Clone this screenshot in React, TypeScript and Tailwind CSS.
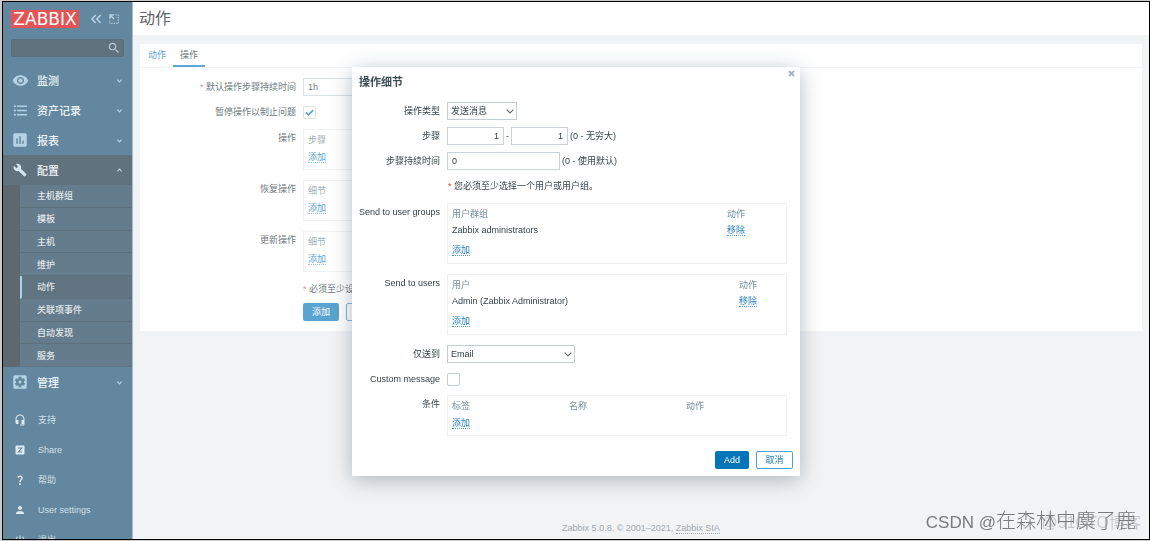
import type { ReactNode } from "react";
import type { IconType } from "react-icons";
import {
    MdBuild,
    MdFormatListBulleted,
    MdHeadsetMic,
    MdInsertChart,
    MdKeyboardDoubleArrowLeft,
    MdPerson,
    MdPowerSettingsNew,
    MdQuestionMark,
    MdSearch,
    MdSettingsApplications,
    MdVisibility,
} from "react-icons/md";

const configItems = ["主机群组", "模板", "主机", "维护", "动作", "关联项事件", "自动发现", "服务"];

function ShareIcon({ className }: { className?: string }) {
    return (
        <svg viewBox="0 0 12 12" className={className} aria-hidden="true">
            <rect x="1.5" y="1.5" width="9" height="9" rx="1" fill="currentColor" />
            <path d="M4 4h3.8L4.4 8H8" fill="none" stroke="#62879e" strokeWidth="1.1" />
        </svg>
    );
}

function KioskIcon() {
    return (
        <svg viewBox="0 0 10 10" className="size-[10px]" fill="none" stroke="currentColor" aria-hidden="true">
            <path d="M1 4.8V1h3.8M1.2 1.2l3.8 3.8" strokeWidth="1.4" />
            <path d="M6.5 .8h2.8v8.5H.8V6.5" strokeWidth="1" strokeDasharray="1.6 .8" />
        </svg>
    );
}

type NavItemProps = { icon: IconType; iconSize?: string; label: string; open?: boolean };

function NavItem({ icon: Icon, iconSize = "size-[17px]", label, open }: NavItemProps) {
    return (
        <a
            href="#"
            className={`flex h-[30px] items-center pl-2 pr-[9px] text-[11px] font-medium text-[#eef4f8] ${open ? "bg-[#61727f]" : ""}`}
        >
            <span className="flex w-[18px] justify-center">
                <Icon className={`${iconSize} ${open ? "text-[#d5e6f0]" : "text-[#b4d3e5]"}`} />
            </span>
            <span className="ml-2 flex-1 pt-px">{label}</span>
            <svg viewBox="0 0 7 7" className={`size-[7px] ${open ? "rotate-180" : ""}`} aria-hidden="true">
                <path d="M1.3 2.6l2.2 2.2 2.2-2.2" fill="none" stroke="#b4d3e5" strokeWidth="1.2" />
            </svg>
        </a>
    );
}

function ServiceItem({ icon: Icon, label }: { icon: IconType | typeof ShareIcon; label: string }) {
    return (
        <a href="#" className="flex h-[30px] items-center pl-[11px] text-[#d3e0e8]">
            <Icon className="size-3 text-[#e0e9ee]" />
            <span className="ml-3">{label}</span>
        </a>
    );
}

function Sidebar() {
    return (
        <aside className="w-[130px] shrink-0 border-r border-[#a9bfcc] bg-[#62879e]">
            <div className="flex h-[34px] items-center pl-2 pr-3 text-[#b8d3e2]">
                <a
                    href="#"
                    className="flex h-[18px] w-[68px] items-center justify-center bg-[#e45454] font-['DejaVu_Sans',sans-serif] text-[17px] text-white"
                >
                    ZABBIX
                </a>
                <button type="button" aria-label="收起" className="ml-2">
                    <MdKeyboardDoubleArrowLeft className="size-[18px]" />
                </button>
                <button type="button" aria-label="隐藏" className="ml-1">
                    <KioskIcon />
                </button>
            </div>
            <div className="mx-2 mt-[3px] flex h-[18px] items-center rounded-xs border border-[#586f80] bg-[#61727f] pr-[2px]">
                <input aria-label="搜索" className="h-full min-w-0 flex-1 bg-transparent px-1 text-white outline-none" />
                <button type="button" aria-label="搜索">
                    <MdSearch className="size-[14px] text-[#b4c6d1]" />
                </button>
            </div>
            <nav className="mt-2">
                <NavItem icon={MdVisibility} label="监测" />
                <NavItem icon={MdFormatListBulleted} label="资产记录" />
                <NavItem icon={MdInsertChart} iconSize="size-[18px]" label="报表" />
                <NavItem icon={MdBuild} iconSize="size-[14px]" label="配置" open />
                <ul className="grid h-[182px] auto-rows-fr bg-[#5f686f] pl-[17px]">
                    {configItems.map((item) => (
                        <li
                            key={item}
                            className={`border-b border-[#5f717d] ${item === "动作" ? "border-l-2 border-l-[#a5d3ef] bg-[#607380]" : "border-l-2 border-l-[#647c8b] bg-[#647c8b]"}`}
                        >
                            <a href="#" className="flex h-full items-center pl-[15px] pt-px font-medium text-[#e0e8ec]">
                                {item}
                            </a>
                        </li>
                    ))}
                </ul>
                <NavItem icon={MdSettingsApplications} iconSize="size-[18px]" label="管理" />
            </nav>
            <nav className="mt-2">
                <ServiceItem icon={MdHeadsetMic} label="支持" />
                <ServiceItem icon={ShareIcon} label="Share" />
                <ServiceItem icon={MdQuestionMark} label="帮助" />
                <ServiceItem icon={MdPerson} label="User settings" />
                <ServiceItem icon={MdPowerSettingsNew} label="退出" />
            </nav>
        </aside>
    );
}

function ActionLink({ children, faded }: { children: ReactNode; faded?: boolean }) {
    return (
        <button
            type="button"
            className={`border-b border-dotted leading-[10px] ${faded ? "border-[#8fc3e0] text-[#5da5d0]" : "border-[#4f9fd0] text-[#1f7cb8]"}`}
        >
            {children}
        </button>
    );
}

function PageRow({ label, children }: { label: string; children: ReactNode }) {
    return (
        <div className="flex">
            <span className="w-[156px] shrink-0 pt-[2px] text-right">{label}</span>
            <div className="ml-[7px] w-[400px]">{children}</div>
        </div>
    );
}

function OperationBox({ heading }: { heading: string }) {
    return (
        <div className="border border-[#eff2f3] px-1 pb-1 pt-px">
            <table className="w-full text-left">
                <thead>
                    <tr className="h-[17px] text-[#a3aeb4]">
                        <th className="font-normal">{heading}</th>
                    </tr>
                </thead>
                <tbody>
                    <tr className="h-[17px]">
                        <td>
                            <ActionLink faded>添加</ActionLink>
                        </td>
                    </tr>
                </tbody>
            </table>
        </div>
    );
}

function ActionPage() {
    return (
        <div className="flex min-w-0 flex-1 flex-col bg-[#f2f3f5] text-[#70797e]">
            <header className="flex h-[33px] items-center bg-white pl-[6px]">
                <h1 className="pt-px text-[16px] text-[#5c6569]">动作</h1>
            </header>
            <main className="mx-[7px] mt-[9px] bg-white pb-[10px]">
                <div className="flex h-6 gap-[7px] border-b border-[#f3f5f6] pl-2">
                    <a href="#" className="pt-1 text-[#5da5d0]">动作</a>
                    <a href="#" className="border-b-2 border-[#5da8d6] px-[7px] pt-1">操作</a>
                </div>
                <form className="mt-[10px]">
                    <div className="flex h-[18px] items-center">
                        <label htmlFor="esc-period" className="w-[156px] text-right">
                            <span className="text-[#ef8b8b]">* </span>默认操作步骤持续时间
                        </label>
                        <input
                            id="esc-period"
                            defaultValue="1h"
                            className="ml-[7px] h-full w-[113px] border border-[#dbe2e5] bg-white px-1"
                        />
                    </div>
                    <div className="mb-2 mt-[7px] flex h-[18px] items-center">
                        <label htmlFor="pause" className="w-[156px] text-right">
                            暂停操作以制止问题
                        </label>
                        <span className="relative ml-[7px] flex">
                            <input
                                id="pause"
                                type="checkbox"
                                defaultChecked
                                className="peer size-[13px] appearance-none rounded-xs border border-[#dbe2e5] bg-white"
                            />
                            <svg
                                viewBox="0 0 13 13"
                                className="pointer-events-none absolute inset-0 hidden size-[13px] peer-checked:block"
                            >
                                <path d="M2.8 6.3l2.6 2.5L10.2 4.2" fill="none" stroke="#5da5d0" strokeWidth="1.8" />
                            </svg>
                        </span>
                    </div>
                    <div className="flex flex-col gap-[10px]">
                        <PageRow label="操作">
                            <OperationBox heading="步骤" />
                        </PageRow>
                        <PageRow label="恢复操作">
                            <OperationBox heading="细节" />
                        </PageRow>
                        <PageRow label="更新操作">
                            <OperationBox heading="细节" />
                        </PageRow>
                    </div>
                    <p className="ml-[163px] mt-[10px]">
                        <span className="text-[#ef8b8b]">* </span>必须至少设
                    </p>
                    <div className="ml-[163px] mt-[7px] flex gap-[7px]">
                        <button type="button" className="h-[18px] w-9 rounded-xs bg-[#5ba4cf] text-white">
                            添加
                        </button>
                        <button
                            type="button"
                            aria-label="取消"
                            className="h-[18px] w-9 rounded-xs border border-[#7fbade] bg-white"
                        />
                    </div>
                </form>
            </main>
            <footer className="mb-1 mt-auto text-center text-[#a0a9ae]">
                Zabbix 5.0.8. © 2001–2021,{" "}
                <a href="#" className="border-b border-dotted border-[#a0a9ae]">Zabbix SIA</a>
            </footer>
        </div>
    );
}

function FieldRow({ label, htmlFor, children }: { label: string; htmlFor?: string; children: ReactNode }) {
    return (
        <div className="flex h-[18px] items-center">
            <label htmlFor={htmlFor} className="mr-[7px] w-[88px] text-right">
                {label}
            </label>
            {children}
        </div>
    );
}

function TableRow({ label, children }: { label: string; children: ReactNode }) {
    return (
        <div className="flex">
            <span className="mr-[7px] w-[88px] shrink-0 pt-[2px] text-right">{label}</span>
            <div className="w-[340px] border border-[#edf0f2] pl-1 pt-px">{children}</div>
        </div>
    );
}

function RecipientTable({ heading, name, nameWidth }: { heading: string; name: string; nameWidth: string }) {
    return (
        <table className="mb-px w-full table-fixed text-left">
            <thead>
                <tr className="h-[17px] text-[#768d99]">
                    <th className={`font-normal ${nameWidth}`}>{heading}</th>
                    <th className="font-normal">动作</th>
                </tr>
            </thead>
            <tbody>
                <tr className="h-4">
                    <td>{name}</td>
                    <td>
                        <ActionLink>移除</ActionLink>
                    </td>
                </tr>
                <tr className="h-6">
                    <td colSpan={2}>
                        <ActionLink>添加</ActionLink>
                    </td>
                </tr>
            </tbody>
        </table>
    );
}

function Select({ id, options, width }: { id: string; options: string[]; width: string }) {
    return (
        <div className={`relative h-full ${width}`}>
            <select id={id} className="h-full w-full appearance-none border border-[#c3ccd1] bg-white px-[3px]">
                {options.map((option) => (
                    <option key={option}>{option}</option>
                ))}
            </select>
            <svg viewBox="0 0 8 5" className="pointer-events-none absolute right-[3px] top-[7px] h-[5px] w-2">
                <path d="M.7.7L4 4 7.3.7" fill="none" stroke="#5f696f" strokeWidth="1.1" />
            </svg>
        </div>
    );
}

function OperationDialog() {
    const inputClass = "h-full border border-[#c9d2d7] bg-white px-1";
    return (
        <div className="fixed inset-x-0 top-0 flex justify-center pl-0.5 pt-[67px]">
            <div
                role="dialog"
                aria-labelledby="dialog-title"
                className="relative w-[448px] bg-white px-[7px] pb-[7px] pt-[6px] text-[#36434a] shadow-[0_4px_20px_rgba(40,70,90,0.35)]"
            >
                <button type="button" aria-label="关闭" className="absolute right-[5px] top-[3px] text-[#a9b4ba]">
                    <svg viewBox="0 0 7 7" className="size-[7px]">
                        <path d="M1 1l5 5M6 1L1 6" stroke="currentColor" strokeWidth="2" />
                    </svg>
                </button>
                <h4 id="dialog-title" className="text-[11px] font-bold leading-[18px] text-[#3c4d56]">
                    操作细节
                </h4>
                <form className="-ml-[7px] mt-[11px]">
                    <div className="mb-2 flex flex-col gap-[7px]">
                        <FieldRow label="操作类型" htmlFor="op-type">
                            <Select id="op-type" options={["发送消息", "远程命令"]} width="w-[70px]" />
                        </FieldRow>
                        <FieldRow label="步骤" htmlFor="step-from">
                            <input id="step-from" defaultValue="1" className={`${inputClass} w-[57px] text-right`} />
                            <span className="w-[7px] text-center">-</span>
                            <input aria-label="步骤至" defaultValue="1" className={`${inputClass} w-[57px] text-right`} />
                            <span className="ml-[2px]">(0 - 无穷大)</span>
                        </FieldRow>
                        <FieldRow label="步骤持续时间" htmlFor="step-duration">
                            <input id="step-duration" defaultValue="0" className={`${inputClass} w-[113px]`} />
                            <span className="ml-[2px]">(0 - 使用默认)</span>
                        </FieldRow>
                        <p className="ml-[96px] h-[18px] leading-[18px]">
                            <span className="text-[#e33734]">* </span>您必须至少选择一个用户或用户组。
                        </p>
                    </div>
                    <div className="flex flex-col gap-[10px]">
                        <TableRow label="Send to user groups">
                            <RecipientTable heading="用户群组" name="Zabbix administrators" nameWidth="w-[275px]" />
                        </TableRow>
                        <TableRow label="Send to users">
                            <RecipientTable heading="用户" name="Admin (Zabbix Administrator)" nameWidth="w-[287px]" />
                        </TableRow>
                    </div>
                    <div className="mt-[10px] flex flex-col gap-[7px]">
                        <FieldRow label="仅送到" htmlFor="media">
                            <Select id="media" options={["Email", "SMS"]} width="w-[128px]" />
                        </FieldRow>
                        <FieldRow label="Custom message" htmlFor="custom">
                            <input
                                id="custom"
                                type="checkbox"
                                className="size-[13px] appearance-none rounded-xs border border-[#c3ccd1] bg-white checked:bg-[#0275b8]"
                            />
                        </FieldRow>
                        <TableRow label="条件">
                            <table className="mb-1 w-full table-fixed text-left">
                                <thead>
                                    <tr className="h-[17px] text-[#768d99]">
                                        <th className="w-[117px] font-normal">标签</th>
                                        <th className="w-[117px] font-normal">名称</th>
                                        <th className="font-normal">动作</th>
                                    </tr>
                                </thead>
                                <tbody>
                                    <tr className="h-[17px]">
                                        <td colSpan={3}>
                                            <ActionLink>添加</ActionLink>
                                        </td>
                                    </tr>
                                </tbody>
                            </table>
                        </TableRow>
                    </div>
                </form>
                <div className="mt-[15px] flex justify-end gap-[7px]">
                    <button type="button" className="h-[18px] w-[34px] rounded-xs bg-[#0275b8] text-white">
                        Add
                    </button>
                    <button type="button" className="h-[18px] w-[37px] rounded-xs border border-[#4f9fd0] bg-white text-[#1f7cb8]">
                        取消
                    </button>
                </div>
            </div>
        </div>
    );
}

function App() {
    return (
        <div className="h-screen bg-[#c9ccca] pb-px pl-0.5 pt-px font-['Liberation_Sans','Noto_Sans_CJK_SC',sans-serif] text-[9px] leading-[14px]">
            <div className="flex h-full overflow-hidden border border-black">
                <Sidebar />
                <ActionPage />
            </div>
            <OperationDialog />
            <div className="fixed bottom-2 right-[9px] whitespace-nowrap text-[16px] leading-5 text-[#c9cccf]">@51CTO博客</div>
            <div className="fixed bottom-[6px] right-[14px] whitespace-nowrap text-[20px] font-light leading-6 text-[#777b7e]">
                <span className="text-[17px]">CSDN @</span>在森林中麋了鹿
            </div>
        </div>
    );
}

export default App;
